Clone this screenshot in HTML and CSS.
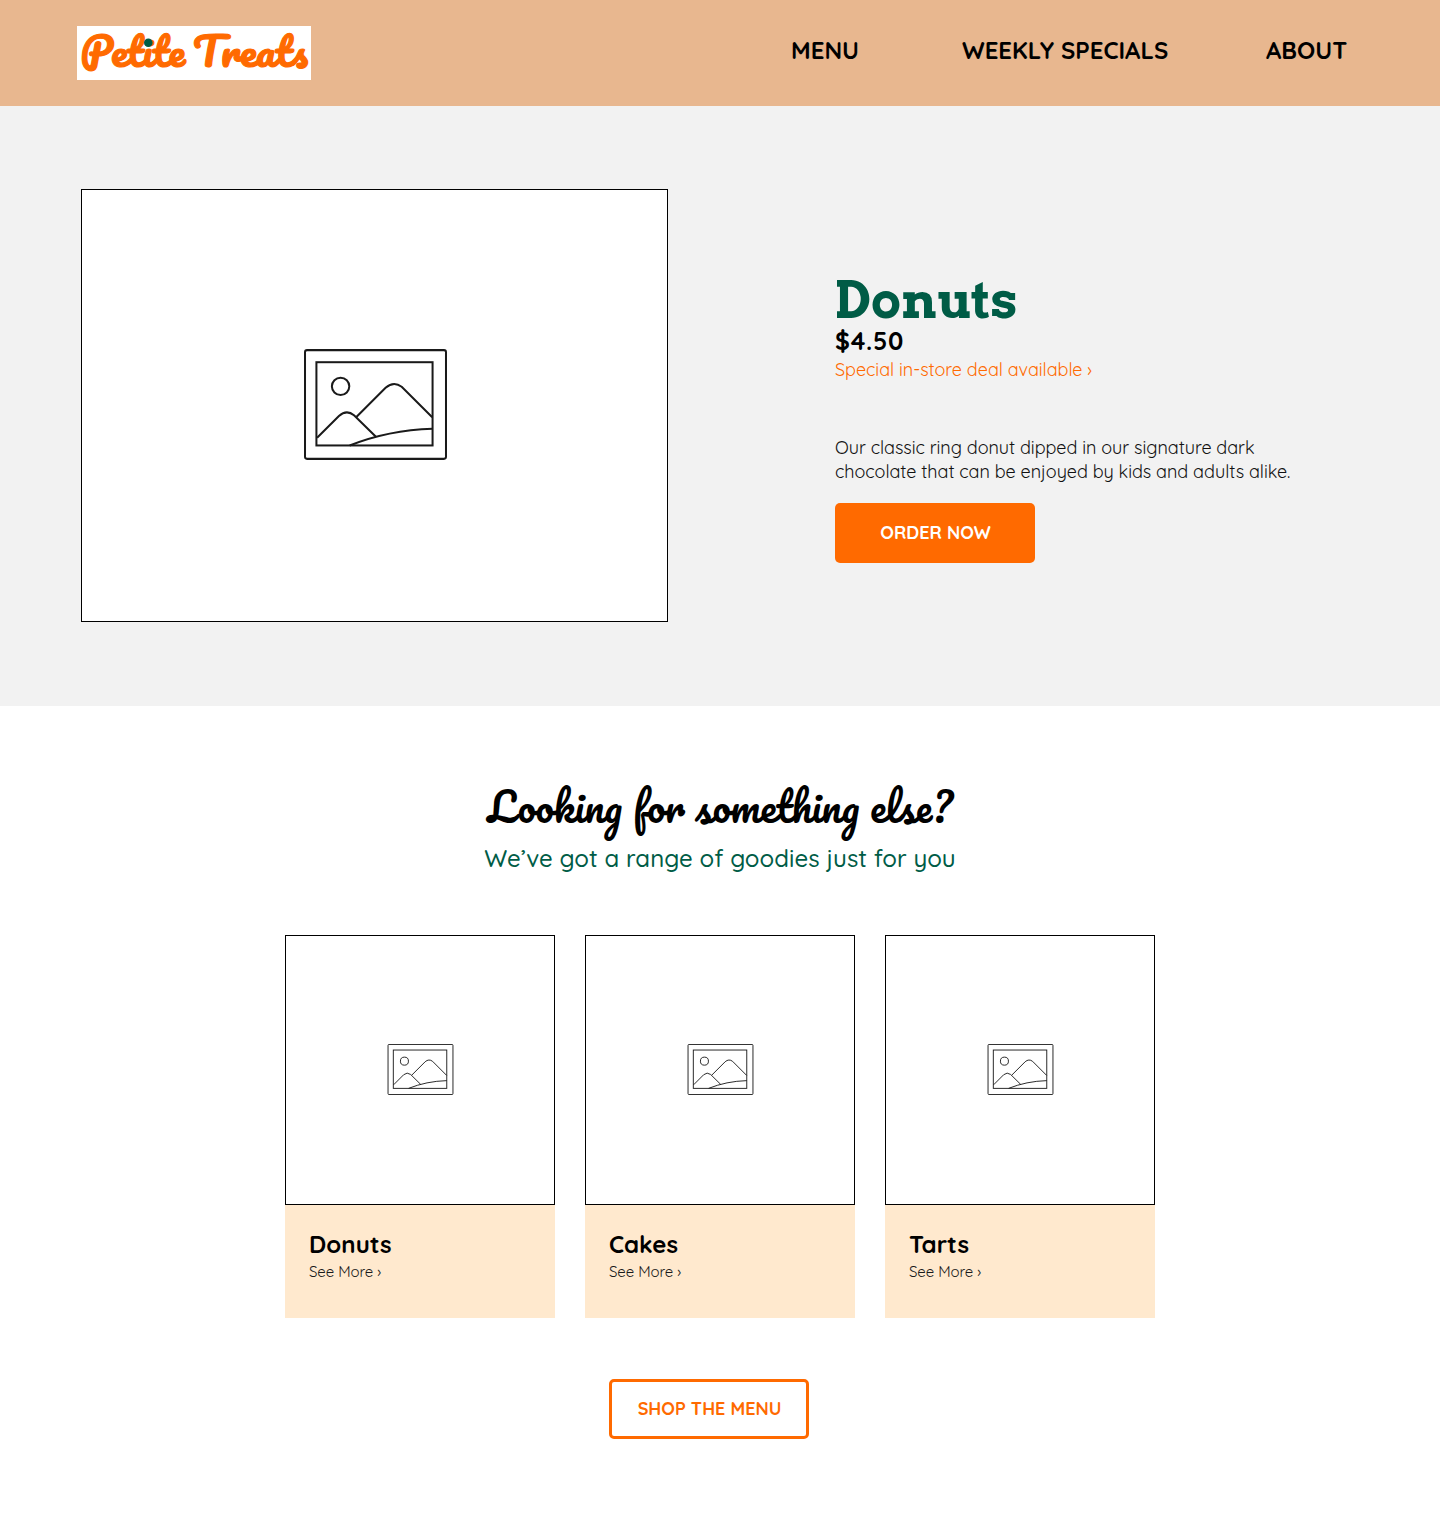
FILE: index.html
```html
<!DOCTYPE html>
<html lang="en">
<head>
<meta charset="utf-8">
<title>Petite Treats</title>
<link rel="stylesheet" href="styles.css">
</head>
<body>
<svg class="symbols" aria-hidden="true">
  <symbol id="picture" viewBox="44 43 426 330">
    <g fill="none" stroke="#1a1a1a" stroke-width="6">
      <rect x="47" y="46" width="420" height="324" rx="6"/>
      <rect x="81" y="82" width="346" height="248"/>
      <circle cx="153" cy="154" r="26"/>
      <path d="M83 307 148 242Q171 222 193 240L259 305"/>
      <path d="M200 245 287 158Q311 137 335 155L426 246"/>
      <path d="M180 330Q295 284 427 280"/>
    </g>
  </symbol>
</svg>
<header class="header">
  <a class="logo" href="#">
    <svg width="234" height="54" role="img" aria-label="Petite Treats">
      <text class="logo-text" x="3.5" y="40.5" textLength="104.5" lengthAdjust="spacingAndGlyphs">Petite</text>
      <text class="logo-text" x="116" y="40.5" textLength="115" lengthAdjust="spacingAndGlyphs">Treats</text>
      <circle cx="71.3" cy="16.8" r="4.3" fill="#005c46"/>
    </svg>
  </a>
  <nav class="nav">
    <a class="nav-menu" href="#">MENU</a>
    <a class="nav-specials" href="#">WEEKLY SPECIALS</a>
    <a class="nav-about" href="#">ABOUT</a>
  </nav>
</header>
<main>
  <section class="hero">
    <div class="hero-image"><svg class="hero-icon"><use href="#picture"/></svg></div>
    <div class="details">
      <h1 class="title">Donuts</h1>
      <p class="price">$4.50</p>
      <a class="deal" href="#">Special in-store deal available ›</a>
      <p class="description">Our classic ring donut dipped in our signature dark<br>chocolate that can be enjoyed by kids and adults alike.</p>
      <a class="button button-order" href="#">ORDER NOW</a>
    </div>
  </section>
  <section class="more">
    <h2 class="more-title">Looking for something else?</h2>
    <p class="more-subtitle">We’ve got a range of goodies just for you</p>
    <div class="cards">
      <article class="card">
        <div class="card-image"><svg class="card-icon"><use href="#picture"/></svg></div>
        <div class="card-body"><h3 class="card-title">Donuts</h3><a class="card-link" href="#">See More ›</a></div>
      </article>
      <article class="card">
        <div class="card-image"><svg class="card-icon"><use href="#picture"/></svg></div>
        <div class="card-body"><h3 class="card-title">Cakes</h3><a class="card-link" href="#">See More ›</a></div>
      </article>
      <article class="card">
        <div class="card-image"><svg class="card-icon"><use href="#picture"/></svg></div>
        <div class="card-body"><h3 class="card-title">Tarts</h3><a class="card-link" href="#">See More ›</a></div>
      </article>
    </div>
    <a class="button button-shop" href="#">SHOP THE MENU</a>
  </section>
</main>
</body>
</html>
```
FILE: styles.css
```css
* { box-sizing: border-box; margin: 0; padding: 0; }
body { font-family: Quicksand, Lato, sans-serif; color: #000; background: #fff; }
a { color: inherit; text-decoration: none; white-space: nowrap; }
svg { display: block; }
.symbols { width: 0; height: 0; position: absolute; }

.header { height: 106px; background: #e8b78f; display: flex; justify-content: space-between; padding: 26px 94px 0 77px; }
.logo { width: 234px; height: 54px; background: #fff; }
.logo-text { font: 400 38px Pacifico, cursive; fill: #ff6a00; stroke: #ff6a00; stroke-width: 1.2px; }
.nav { display: flex; padding-top: 9px; font-size: 24px; font-weight: 700; line-height: 30px; }
.nav-menu { width: 171px; }
.nav-specials { width: 304px; }
.nav-about { width: 80px; }

.hero { height: 600px; background: #f2f2f2; display: flex; padding: 83px 81px 0; }
.hero-image { width: 587px; height: 433px; background: #fff; border: 1px solid #000; display: grid; place-items: center; padding: 0 0 3px 2px; }
.hero-icon { width: 143px; height: 111px; }
.details { display: flex; flex-direction: column; align-items: flex-start; margin-left: 167px; padding-top: 86px; }
.title { font: 700 50px/50px Arvo, serif; color: #005c46; }
.price { font-size: 25px; font-weight: 700; line-height: 30px; margin-top: 1px; letter-spacing: .7px; }
.deal { font-size: 18px; font-weight: 400; line-height: 24px; margin-top: 2px; color: #ff6a00; letter-spacing: -.04px; }
.description { font-size: 18px; font-weight: 400; line-height: 24px; margin-top: 54px; white-space: nowrap; letter-spacing: -.045px; color: #111; }
.button { width: 200px; height: 60px; border-radius: 5px; display: flex; align-items: center; justify-content: center; font-size: 18px; font-weight: 700; padding: 0 0 2px 1px; }
.button-order { background: #ff6a00; color: #fff; margin-top: 19px; }

.more { height: 820px; padding-top: 65px; display: flex; flex-direction: column; align-items: center; }
.more-title { font: 400 40px/70px Pacifico, cursive; white-space: nowrap; }
.more-subtitle { font-size: 24px; font-weight: 500; line-height: 30px; margin-top: 2px; color: #005c46; white-space: nowrap; letter-spacing: .07px; }
.cards { display: flex; gap: 30px; margin-top: 62px; }
.card { width: 270px; height: 383px; background: #ffe9ce; }
.card-image { height: 270px; background: #fff; border: 1px solid #000; display: grid; place-items: center; padding-bottom: 2px; }
.card-icon { width: 67px; height: 51px; }
.card-body { padding: 24px; }
.card-title { font-size: 24px; font-weight: 700; line-height: 30px; }
.card-link { display: block; font-size: 15px; font-weight: 400; line-height: 26px; letter-spacing: -.08px; color: #1a1a1a; }
.button-shop { border: 3px solid #ff6a00; color: #ff6a00; margin: 61px 22px 0 0; }
```
